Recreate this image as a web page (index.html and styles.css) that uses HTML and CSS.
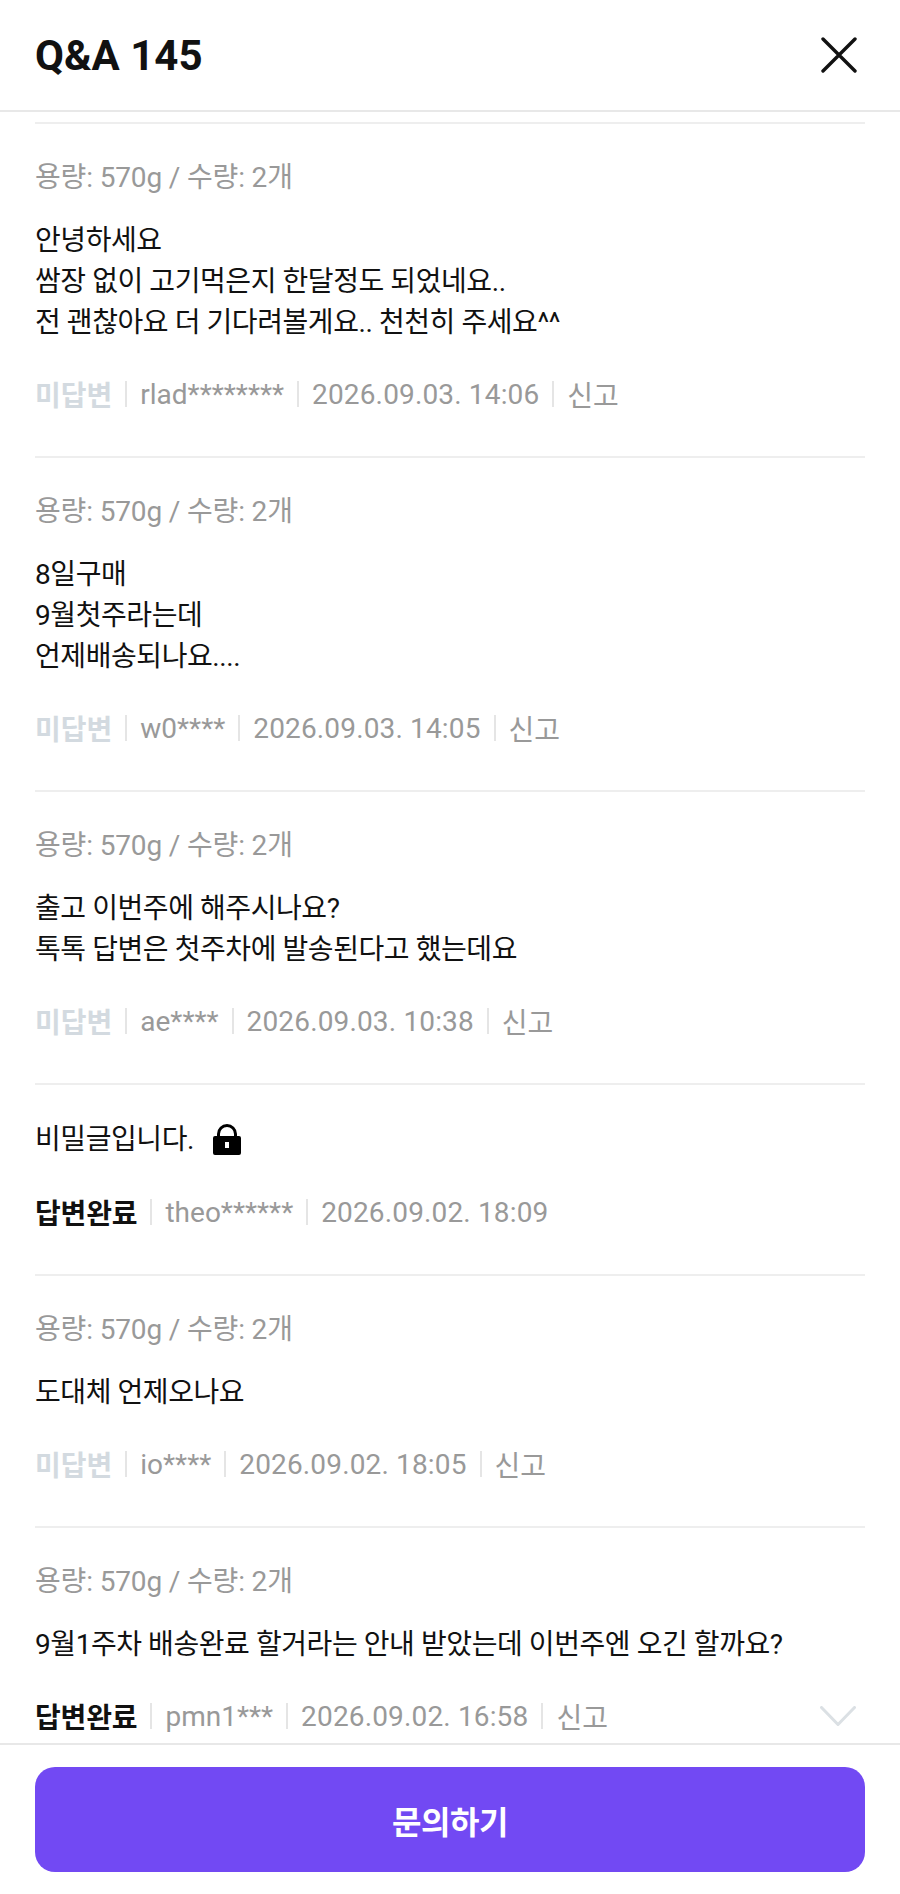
FILE: index.html
```html
<!DOCTYPE html>
<html lang="ko">
<head>
<meta charset="utf-8">
<title>Q&amp;A 145</title>
<link rel="stylesheet" href="styles.css">
</head>
<body>
<div class="page">
  <header class="header">
    <h1 class="title">Q&amp;A 145</h1>
    <button class="close" aria-label="닫기">
      <svg class="close-icon" viewBox="0 0 36 36"><path d="M2 2L34 34M34 2L2 34"/></svg>
    </button>
  </header>
  <main class="list">
    <article class="item">
      <p class="meta">용량: 570g / 수량: 2개</p>
      <p class="body">안녕하세요<br>쌈장 없이 고기먹은지 한달정도 되었네요..<br>전 괜찮아요 더 기다려볼게요.. 천천히 주세요^^</p>
      <div class="info"><span class="status pending">미답변</span><span class="cell">rlad********</span><span class="cell date">2026.09.03. 14:06</span><span class="cell">신고</span></div>
    </article>
    <article class="item">
      <p class="meta">용량: 570g / 수량: 2개</p>
      <p class="body">8일구매<br>9월첫주라는데<br>언제배송되나요....</p>
      <div class="info"><span class="status pending">미답변</span><span class="cell">w0****</span><span class="cell date">2026.09.03. 14:05</span><span class="cell">신고</span></div>
    </article>
    <article class="item">
      <p class="meta">용량: 570g / 수량: 2개</p>
      <p class="body">출고 이번주에 해주시나요?<br>톡톡 답변은 첫주차에 발송된다고 했는데요</p>
      <div class="info"><span class="status pending">미답변</span><span class="cell">ae****</span><span class="cell date">2026.09.03. 10:38</span><span class="cell">신고</span></div>
    </article>
    <article class="item">
      <p class="body secret">비밀글입니다.
        <svg class="lock" viewBox="0 0 28 31"><path d="M5.500 13V10a8.500 8.500 0 0 1 17 0V13" class="shackle"/><path d="M2 12h24a2 2 0 0 1 2 2V29a2 2 0 0 1-2 2H2a2 2 0 0 1-2-2V14a2 2 0 0 1 2-2zM12 18v6h4v-6z" class="lock-body"/></svg>
      </p>
      <div class="info"><span class="status done">답변완료</span><span class="cell">theo******</span><span class="cell date">2026.09.02. 18:09</span></div>
    </article>
    <article class="item">
      <p class="meta">용량: 570g / 수량: 2개</p>
      <p class="body">도대체 언제오나요</p>
      <div class="info"><span class="status pending">미답변</span><span class="cell">io****</span><span class="cell date">2026.09.02. 18:05</span><span class="cell">신고</span></div>
    </article>
    <article class="item">
      <p class="meta">용량: 570g / 수량: 2개</p>
      <p class="body">9월1주차 배송완료 할거라는 안내 받았는데 이번주엔 오긴 할까요?</p>
      <div class="info"><span class="status done">답변완료</span><span class="cell">pmn1***</span><span class="cell date">2026.09.02. 16:58</span><span class="cell">신고</span>
        <svg class="chevron" viewBox="0 0 36 20"><path d="M1.500 1.500L18 18.500L34.500 1.500"/></svg>
      </div>
    </article>
  </main>
  <footer class="footer">
    <button class="ask">문의하기</button>
  </footer>
</div>
</body>
</html>
```
FILE: styles.css
```css
* { box-sizing: border-box; }
html, body { margin: 0; padding: 0; background: #fff; }
.page {
  width: 900px;
  height: 1894px;
  display: flex;
  flex-direction: column;
  overflow: hidden;
  font-family: Roboto, "Noto Sans CJK KR", sans-serif;
  color: #111;
}
.header {
  flex: none;
  height: 112px;
  padding: 0 43px 0 35px;
  display: flex;
  align-items: center;
  justify-content: space-between;
  border-bottom: 2px solid #e8e8e8;
}
.title { margin: 0; font-size: 42px; font-weight: 700; color: #111; }
.close { border: 0; background: none; padding: 0; display: flex; }
.close-icon { width: 36px; height: 36px; }
.close-icon path { fill: none; stroke: #111; stroke-width: 3.4; stroke-linecap: round; }
.list { flex: 1; min-height: 0; overflow: hidden; padding: 10px 35px 0; }
.item { border-top: 2px solid #eee; padding: 34px 0 42px; }
.item .meta { margin: 0 0 22px; font-size: 28px; line-height: 40px; color: #999; letter-spacing: -0.15px; }
.item .body { margin: 0 0 31px; font-size: 28px; line-height: 41px; color: #111; letter-spacing: -0.43px; }
.item .secret { display: flex; align-items: center; gap: 19px; margin-bottom: 32px; }
.lock { width: 28px; height: 31px; }
.lock .shackle { fill: none; stroke: #000; stroke-width: 3; }
.lock .lock-body { fill: #000; fill-rule: evenodd; }
.info { display: flex; align-items: center; height: 40px; font-size: 28px; color: #999; }
.status { font-weight: 700; }
.pending { color: #d3dae0; }
.done { color: #111; letter-spacing: -0.15px; }
.cell { display: flex; align-items: center; }
.date { letter-spacing: 0.15px; }
.cell::before { content: ""; width: 2px; height: 26px; background: #e5e5e5; margin: 0 13px; }
.chevron { width: 36px; height: 20px; margin-left: auto; margin-right: 9px; }
.chevron path { fill: none; stroke: #dbe0e4; stroke-width: 3; stroke-linecap: round; }
.footer { flex: none; height: 151px; padding: 22px 35px 0; border-top: 2px solid #e8e8e8; background: #fff; }
.ask {
  width: 100%;
  height: 105px;
  border: 0;
  border-radius: 20px;
  background: #7249f3;
  color: #fff;
  font-family: inherit;
  font-size: 32px;
  font-weight: 700;
  letter-spacing: -0.5px;
}
```
